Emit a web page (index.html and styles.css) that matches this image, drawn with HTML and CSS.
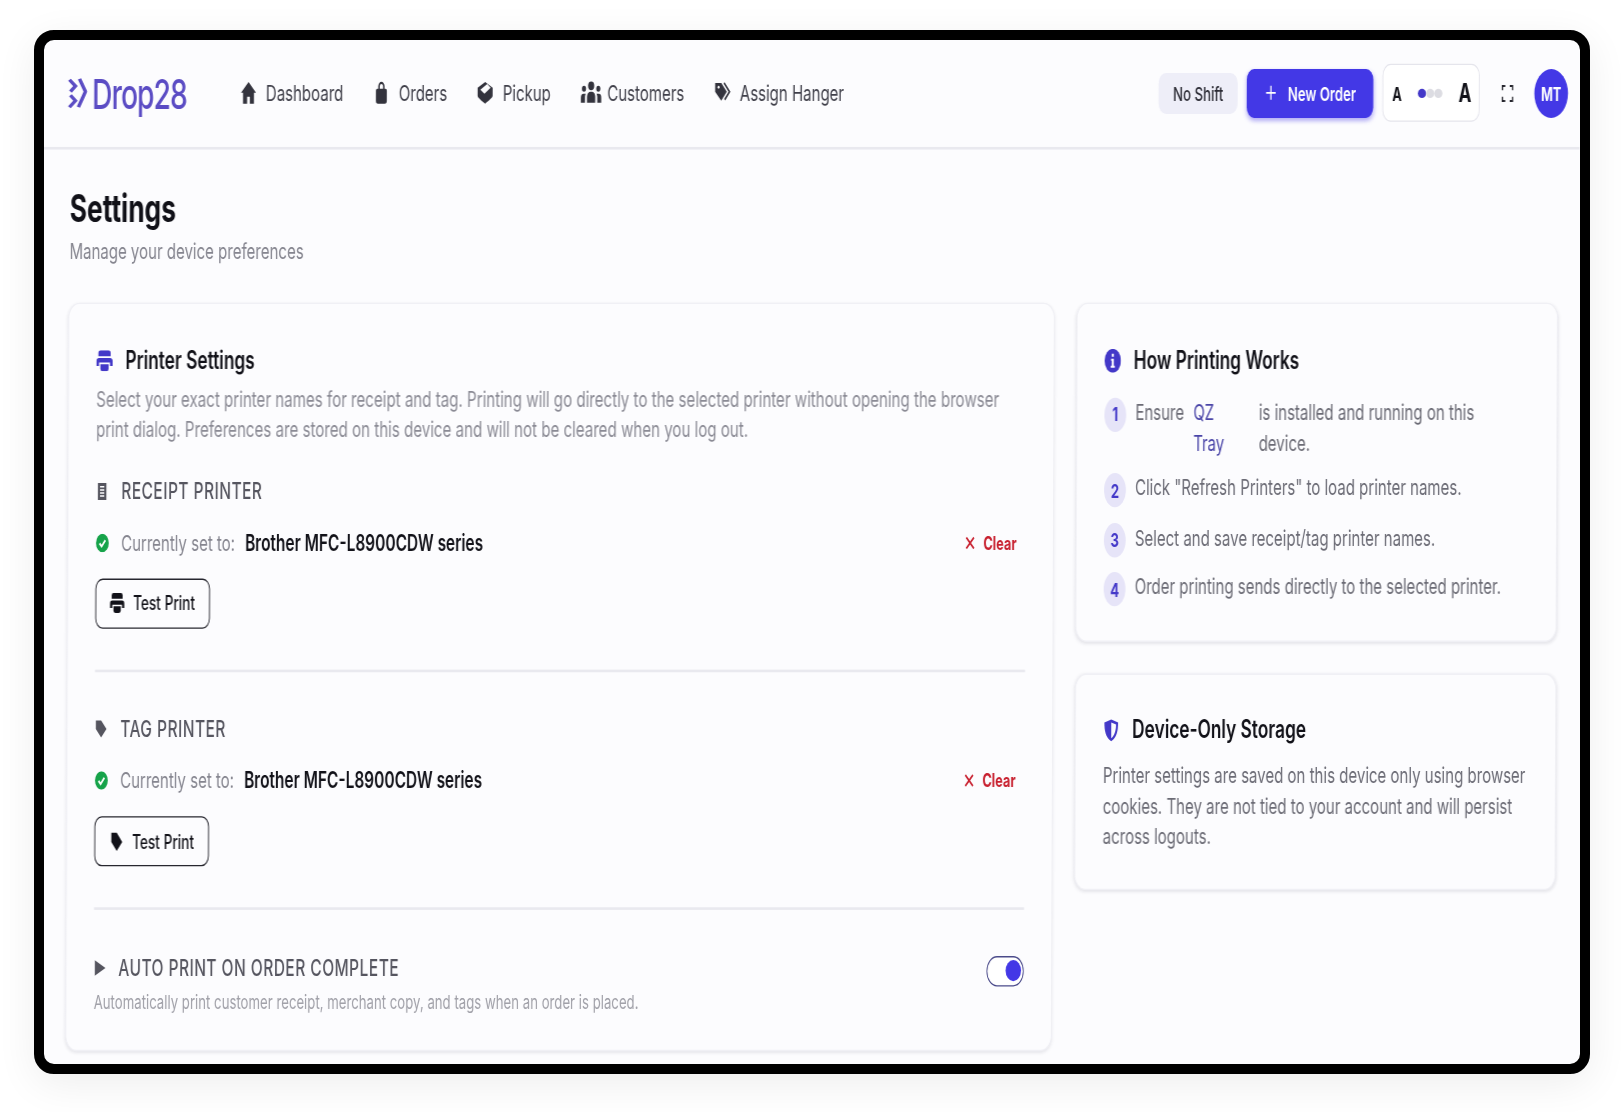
FILE: index.html
```html
<!DOCTYPE html>
<html lang="en">
<head>
  <meta charset="UTF-8" />
  <title>Drop28 Settings</title>
  <link rel="stylesheet" href="styles.css">
</head>
<body>
  <div class="frame">
    <div class="app">
      <!-- Top bar -->
      <header class="topbar">
        <div class="logo">
          <svg class="logo-mark" viewBox="0 0 20 36" preserveAspectRatio="none"><path d="M2 3l6 7-5 6M3 20l5 6-6 7"/><path d="M12 2l6 14-2 5-5 12"/></svg>
          <span>Drop28</span>
        </div>
        <nav class="nav">
          <a class="nav-item">
            <svg class="nav-icon" viewBox="0 0 24 24"><path d="M12 1 1 12h3v11h6v-7h4v7h6V12h3z"/></svg>Dashboard
          </a>
          <a class="nav-item">
            <svg class="nav-icon" viewBox="0 0 24 24"><path d="M6 8h12a2 2 0 0 1 2 2v10a3 3 0 0 1-3 3H7a3 3 0 0 1-3-3V10a2 2 0 0 1 2-2z"/><path class="line" d="M8.500 10V5.500a3.500 3.500 0 0 1 7 0V10"/></svg>Orders
          </a>
          <a class="nav-item">
            <svg class="nav-icon" viewBox="0 0 24 24"><path d="M12 1 23 7v8c0 2-6 5-11 8C7 20 1 17 1 15V7z"/><path class="cut" d="M15 3 20 7 11 13 5 9z"/></svg>Pickup
          </a>
          <a class="nav-item">
            <svg class="nav-icon wide" viewBox="0 0 30 24"><circle cx="15" cy="5" r="4.500"/><circle cx="4.500" cy="8" r="3"/><circle cx="25.500" cy="8" r="3"/><path d="M9 22v-6a5 5 0 0 1 5-5h2a5 5 0 0 1 5 5v6z"/><path d="M0 22v-5a4 4 0 0 1 4-4h3a8 8 0 0 0-1 3v6z M30 22v-5a4 4 0 0 0-4-4h-3a8 8 0 0 1 1 3v6z"/></svg>Customers
          </a>
          <a class="nav-item">
            <svg class="nav-icon" viewBox="0 0 24 24"><path d="M1 2h9l8 9-8 9-9-9z"/><circle class="cut" cx="6" cy="6.500" r="1.500"/><path class="line" d="M14 2l8 9-7 8"/></svg>Assign Hanger
          </a>
        </nav>
        <div class="top-actions">
          <span class="shift-pill">No Shift</span>
          <button class="new-order">
            <svg class="plus" viewBox="0 0 16 16"><path d="M8 1v14M1 8h14"/></svg>New Order
          </button>
          <div class="font-size">
            <span class="a-small">A</span>
            <span class="dots"><i class="on"></i><i></i><i></i></span>
            <span class="a-large">A</span>
          </div>
          <svg class="expand" viewBox="0 0 16 16"><path d="M1 5V1h4M11 1h4v4M15 11v4h-4M5 15H1v-4"/></svg>
          <span class="avatar">MT</span>
        </div>
      </header>

      <main class="page">
        <h1 class="page-title">Settings</h1>
        <p class="page-sub">Manage your device preferences</p>

        <div class="columns">
          <!-- Printer settings -->
          <section class="card printer-card">
            <h2 class="card-title">
              <svg class="title-icon print-icon purple" viewBox="0 0 24 24" preserveAspectRatio="none"><path d="M6 0h12a3 3 0 0 1 3 3v4H3V3a3 3 0 0 1 3-3z"/><path d="M4 9h16a4 4 0 0 1 4 4v5h-4v-4H4v4H0v-5a4 4 0 0 1 4-4z"/><path d="M6 16h12v5a3 3 0 0 1-3 3H9a3 3 0 0 1-3-3z"/></svg>
              Printer Settings
            </h2>
            <p class="card-text">Select your exact printer names for receipt and tag. Printing will go directly to the selected printer without opening the browser print dialog. Preferences are stored on this device and will not be cleared when you log out.</p>

            <div class="printer-block">
              <div class="section-label">
                <svg class="label-icon" viewBox="0 0 24 24"><path d="M4 1h16v22H4z"/><path class="cut-line" d="M8 6h8M8 10h8M8 14h8M8 18h8"/></svg>
                Receipt Printer
              </div>
              <div class="status-row">
                <svg class="check" viewBox="0 0 24 24"><circle cx="12" cy="12" r="12"/><path d="M6.500 12.500l4 4 7-8"/></svg>
                <span class="status-label">Currently set to:</span>
                <strong class="status-name">Brother MFC-L8900CDW series</strong>
                <a class="clear"><svg viewBox="0 0 12 12"><path d="M1 1l10 10M11 1 1 11"/></svg>Clear</a>
              </div>
              <button class="test-print">
                <svg class="btn-icon" viewBox="0 0 24 24" preserveAspectRatio="none"><path d="M6 0h12a3 3 0 0 1 3 3v4H3V3a3 3 0 0 1 3-3z"/><path d="M4 9h16a4 4 0 0 1 4 4v5h-4v-4H4v4H0v-5a4 4 0 0 1 4-4z"/><path d="M6 16h12v5a3 3 0 0 1-3 3H9a3 3 0 0 1-3-3z"/></svg>
                Test Print
              </button>
            </div>

            <div class="printer-block">
              <div class="section-label">
                <svg class="label-icon" viewBox="0 0 24 24"><path d="M2 1h10l10 11-10 11L2 12z"/></svg>
                Tag Printer
              </div>
              <div class="status-row">
                <svg class="check" viewBox="0 0 24 24"><circle cx="12" cy="12" r="12"/><path d="M6.500 12.500l4 4 7-8"/></svg>
                <span class="status-label">Currently set to:</span>
                <strong class="status-name">Brother MFC-L8900CDW series</strong>
                <a class="clear"><svg viewBox="0 0 12 12"><path d="M1 1l10 10M11 1 1 11"/></svg>Clear</a>
              </div>
              <button class="test-print">
                <svg class="btn-icon" viewBox="0 0 24 24" preserveAspectRatio="none"><path d="M4 1h9l9 11-9 11-9-11z"/></svg>
                Test Print
              </button>
            </div>

            <div class="auto-print">
              <div>
                <div class="section-label">
                  <svg class="label-icon" viewBox="0 0 24 24"><path d="M2 2l20 10L2 22z"/></svg>
                  Auto Print on Order Complete
                </div>
                <p class="auto-text">Automatically print customer receipt, merchant copy, and tags when an order is placed.</p>
              </div>
              <span class="toggle"><i></i></span>
            </div>
          </section>

          <div class="side">
            <section class="card steps-card">
              <h2 class="card-title">
                <svg class="title-icon purple" viewBox="0 0 24 24"><circle cx="12" cy="12" r="12"/><path class="white" d="M10.500 5h3v3h-3zM9.500 10h4v7h1.500v2H9v-2h1.500v-5h-1z"/></svg>
                How Printing Works
              </h2>
              <ol class="steps">
                <li class="step">
                  <span class="step-num">1</span>
                  <div class="step-text first">
                    <span>Ensure</span>
                    <a class="qz">QZ Tray</a>
                    <span class="qz-rest">is installed and running on this device.</span>
                  </div>
                </li>
                <li class="step"><span class="step-num">2</span><div class="step-text">Click "Refresh Printers" to load printer names.</div></li>
                <li class="step"><span class="step-num">3</span><div class="step-text">Select and save receipt/tag printer names.</div></li>
                <li class="step"><span class="step-num">4</span><div class="step-text">Order printing sends directly to the selected printer.</div></li>
              </ol>
            </section>

            <section class="card storage-card">
              <h2 class="card-title">
                <svg class="title-icon purple" viewBox="0 0 24 24"><path d="M12 1 22 4c0 9-2 15-10 19C4 19 2 13 2 4z"/><path class="white" d="M12 4v16c5-3 7-8 7-14z"/></svg>
                Device-Only Storage
              </h2>
              <p class="storage-text">Printer settings are saved on this device only using browser cookies. They are not tied to your account and will persist across logouts.</p>
            </section>
          </div>
        </div>
      </main>
    </div>
  </div>
</body>
</html>
```

FILE: styles.css
```css
/* The screenshot is stretched, so the app is laid out at its own size and scaled */
body {
  margin: 0;
  padding: 30px 34px;
  height: 1112px;
  box-sizing: border-box;
  overflow: hidden;
  background: #fff;
  font-family: Inter, "Liberation Sans", sans-serif;
  color: #111118;
}
.frame {
  width: 1556px;
  height: 1044px;
  box-sizing: border-box;
  border: 10px solid #000;
  border-radius: 20px;
  overflow: hidden;
  background: #fcfcfe;
  box-shadow: 0 10px 40px rgba(0,0,0,0.07);
}
.app {
  width: 1688px;
  height: 776px;
  transform-origin: top left;
  transform: scale(0.91, 1.32) skewX(-0.35deg);
  filter: blur(0.3px);
}

/* Top bar */
.topbar {
  height: 83px;
  box-sizing: border-box;
  display: flex;
  align-items: center;
  padding: 0 13px 1px 26px;
  border-bottom: 2px solid #e9e9ef;
}
.logo {
  display: flex;
  align-items: center;
  gap: 5px;
  width: 190px;
  color: #5b4cc4;
  font-size: 31px;
  font-weight: 500;
  letter-spacing: -1px;
}
.logo-mark {
  width: 22px;
  height: 25px;
  fill: none;
  stroke: #5b4cc4;
  stroke-width: 3.500;
}
.nav {
  display: flex;
  gap: 33px;
}
.nav-item {
  display: flex;
  align-items: center;
  gap: 10px;
  font-size: 16.500px;
  color: #40404a;
}
.nav-icon {
  width: 18px;
  height: 18px;
  fill: #33333d;
}
.nav-icon.wide {
  width: 23px;
  margin-right: -4px;
}
.nav-icon .line {
  fill: none;
  stroke: #33333d;
  stroke-width: 2.200;
}
.nav-icon .cut {
  fill: #fcfcfe;
}
.top-actions {
  margin-left: auto;
  display: flex;
  align-items: center;
}
.shift-pill {
  width: 87px;
  height: 31px;
  display: flex;
  align-items: center;
  justify-content: center;
  border-radius: 8px;
  background: #eeeef8;
  font-size: 14.500px;
  font-weight: 500;
  color: #2a2a33;
}
.new-order {
  margin-left: 10px;
  width: 139px;
  height: 37px;
  display: flex;
  align-items: center;
  justify-content: center;
  gap: 11px;
  border: 0;
  border-radius: 8px;
  background: #4338e6;
  box-shadow: 0 2px 4px rgba(67,56,230,0.4);
  color: #fff;
  font-family: inherit;
  font-size: 14.500px;
  font-weight: 600;
}
.plus {
  width: 15px;
  height: 12px;
  fill: none;
  stroke: #fff;
  stroke-width: 1.800;
}
.font-size {
  margin-left: 10px;
  width: 107px;
  height: 44px;
  box-sizing: border-box;
  display: flex;
  align-items: center;
  justify-content: space-between;
  padding: 0 8px 0 10px;
  background: #fff;
  border: 1px solid #e5e5ec;
  border-radius: 9px;
  font-weight: 700;
}
.a-small {
  font-size: 14px;
}
.a-large {
  font-size: 19px;
}
.dots {
  display: flex;
}
.dots i {
  width: 9px;
  height: 7px;
  border-radius: 50%;
  background: #dcdce2;
}
.dots i.on {
  background: #4338c8;
}
.expand {
  margin-left: 24px;
  width: 13px;
  height: 13px;
  fill: none;
  stroke: #26262e;
  stroke-width: 2;
}
.avatar {
  margin-left: 23px;
  width: 37px;
  height: 37px;
  display: flex;
  align-items: center;
  justify-content: center;
  border-radius: 50%;
  background: #4338e6;
  color: #fff;
  font-size: 14px;
  font-weight: 700;
}

/* Page */
.page {
  padding: 0 23px 0 28px;
}
.page-title {
  margin: 29px 0 0 1px;
  font-size: 29px;
  line-height: 32px;
  font-weight: 700;
}
.page-sub {
  margin: 5px 0 0 1px;
  font-size: 16.500px;
  line-height: 22px;
  color: #85858f;
}
.columns {
  display: grid;
  grid-template-columns: 1084px 1fr;
  gap: 24px;
  margin-top: 28px;
  align-items: start;
}
.side {
  display: flex;
  flex-direction: column;
  gap: 24px;
}
.card {
  box-sizing: border-box;
  background: #fcfcfe;
  border: 1px solid #f0f0f5;
  border-radius: 12px;
  box-shadow: 0 1px 3px rgba(30,30,60,0.1);
}
.printer-card {
  height: 567px;
  padding: 32.500px 30px 0;
}
.card-title {
  margin: 0;
  display: flex;
  align-items: center;
  gap: 14px;
  font-size: 19px;
  line-height: 20px;
  font-weight: 600;
}
.title-icon {
  width: 18px;
  height: 18px;
}
.print-icon {
  width: 18px;
  height: 16px;
}
.purple {
  fill: #4338c8;
}
.title-icon .white {
  fill: #fcfcfe;
}
.card-text {
  margin: 8.500px 0 0;
  font-size: 16.600px;
  line-height: 22.500px;
  color: #8b8b95;
}
.printer-block {
  padding-bottom: 31px;
  border-bottom: 2px solid #e9e9ef;
  margin-bottom: 33.500px;
}
.printer-block:first-of-type {
  margin-top: 25.800px;
}
.section-label {
  display: flex;
  align-items: center;
  gap: 14px;
  font-size: 17px;
  line-height: 20px;
  font-weight: 500;
  letter-spacing: 0.550px;
  text-transform: uppercase;
  color: #55555f;
}
.label-icon {
  width: 14px;
  height: 14px;
  fill: #55555f;
}
.cut-line {
  stroke: #fcfcfe;
  stroke-width: 2;
}
.status-row {
  margin-top: 19px;
  display: flex;
  align-items: center;
  font-size: 16.500px;
  line-height: 20px;
}
.check {
  width: 15px;
  height: 14px;
  margin-right: 13px;
  fill: #16a34a;
}
.check path {
  fill: none;
  stroke: #fff;
  stroke-width: 3;
}
.status-label {
  color: #85858f;
}
.status-name {
  margin-left: 11px;
  font-size: 17px;
  font-weight: 600;
}
.clear {
  margin-left: auto;
  margin-right: 10px;
  display: flex;
  align-items: center;
  gap: 9px;
  font-size: 14px;
  font-weight: 700;
  color: #c8202f;
}
.clear svg {
  width: 12px;
  height: 10px;
  fill: none;
  stroke: #c8202f;
  stroke-width: 2;
}
.test-print {
  margin-top: 17px;
  width: 126px;
  height: 38px;
  display: flex;
  align-items: center;
  justify-content: center;
  gap: 9px;
  background: transparent;
  border: 1px solid #26262e;
  border-radius: 8px;
  font-family: inherit;
  font-size: 15px;
  font-weight: 500;
  color: #111118;
}
.btn-icon {
  width: 16px;
  height: 15px;
  fill: #111118;
}
.auto-print {
  margin-top: 0.300px;
  display: flex;
  justify-content: space-between;
  align-items: flex-start;
}
.auto-print .section-label {
  gap: 13px;
}
.auto-text {
  margin: 6px 0 0;
  font-size: 14.500px;
  line-height: 20px;
  color: #a0a0a8;
}
.toggle {
  margin-top: 1px;
  width: 41px;
  height: 23px;
  box-sizing: border-box;
  display: flex;
  align-items: center;
  justify-content: flex-end;
  padding-right: 2px;
  background: #fff;
  border: 1px solid #4a4a8a;
  border-radius: 12px;
}
.toggle i {
  width: 17px;
  height: 16px;
  border-radius: 50%;
  background: #4338e6;
}

/* Right column */
.steps-card {
  height: 257px;
  padding: 32.500px 29px 0 30px;
}
.steps {
  list-style: none;
  margin: 18.300px 0 0;
  padding: 0;
  display: flex;
  flex-direction: column;
  gap: 11.500px;
}
.step {
  display: flex;
  gap: 10px;
  font-size: 16.500px;
  line-height: 23px;
  color: #6b6b75;
}
.step-num {
  flex: none;
  width: 24px;
  height: 26px;
  display: flex;
  align-items: center;
  justify-content: center;
  border-radius: 50%;
  background: #e6e4f8;
  color: #4338c8;
  font-size: 14.500px;
  font-weight: 700;
}
.step-text.first {
  display: flex;
  gap: 10px;
}
.qz {
  flex: none;
  width: 58px;
  margin-right: 4px;
  color: #4a45a8;
}
.qz-rest {
  width: 265px;
}
.storage-card {
  height: 164px;
  padding: 32px 28px 0 30px;
}
.storage-text {
  margin: 12.500px 0 0;
  font-size: 16.500px;
  line-height: 23.200px;
  color: #6b6b75;
}
```
